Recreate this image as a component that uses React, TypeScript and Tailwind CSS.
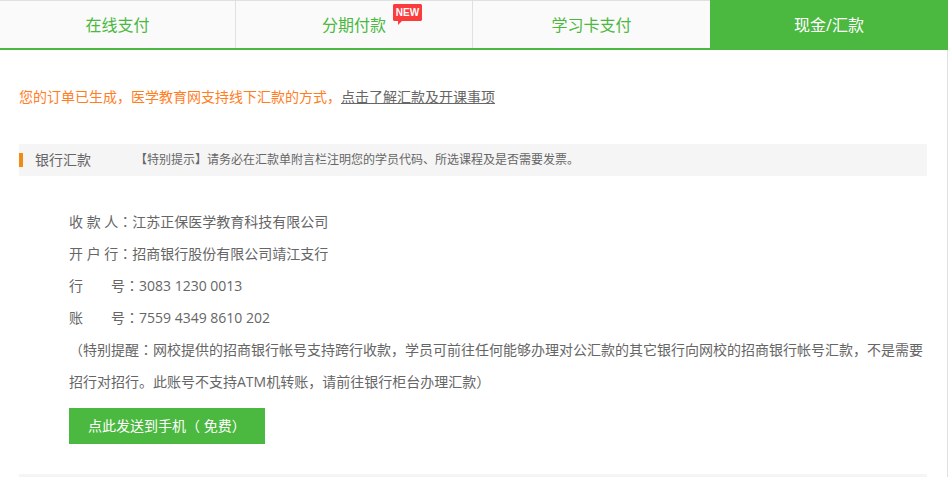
type Tab = {
  label: string;
  isNew?: boolean;
  active?: boolean;
};

const tabs: Tab[] = [
  { label: "在线支付" },
  { label: "分期付款", isNew: true },
  { label: "学习卡支付" },
  { label: "现金/汇款", active: true },
];

const account = [
  { label: "收 款 人", value: "江苏正保医学教育科技有限公司" },
  { label: "开 户 行", value: "招商银行股份有限公司靖江支行" },
  { label: "行\u3000\u3000号", value: "3083 1230 0013" },
  { label: "账\u3000\u3000号", value: "7559 4349 8610 202" },
];

// The SC face sets the full-width colon to the left, the JP face centers it.
function Colon() {
  return (
    <span lang="ja" className="font-['Open_Sans','Noto_Sans_CJK_JP',sans-serif]">
      ：
    </span>
  );
}

function NewBadge() {
  return (
    <span className="absolute left-full top-[3px] ml-[7px] h-[21px] w-[29px]">
      <svg viewBox="0 0 29 21" className="absolute inset-0 h-full w-full" aria-hidden="true">
        <path
          d="M1 0H28L29 1V16L28 17H9L5 21V17H1L0 16V1Z"
          fill="#fb3c3c"
        />
      </svg>
      <span className="relative block text-center font-['Liberation_Sans'] text-[10px] font-bold leading-[17px] text-white">
        NEW
      </span>
    </span>
  );
}

function PayTabs() {
  return (
    <nav className="grid grid-cols-[236fr_237fr_237fr_238fr] border-b-2 border-[#4bb83f]">
      {tabs.map((tab) => (
        <a
          key={tab.label}
          href="#"
          aria-current={tab.active ? "page" : undefined}
          className={
            tab.active
              ? "flex h-12 justify-center border-t border-[#4bb83f] bg-[#4bb83f] text-base leading-12 text-white"
              : "flex h-12 justify-center border-t border-r border-[#e0e0e0] bg-[#fafafa] text-base leading-12 text-[#4bb83f] nth-3:border-r-0"
          }
        >
          <span className="relative">
            {tab.label}
            {tab.isNew && <NewBadge />}
          </span>
        </a>
      ))}
    </nav>
  );
}

export default function App() {
  return (
    <div className="mr-px bg-white font-['Open_Sans','Noto_Sans_CJK_SC',sans-serif] text-sm text-[#666]">
      <PayTabs />

      <main className="border-r border-[#e0e0e0] pr-5 pl-[19px]">
        <p className="pt-[31px] leading-8 text-[#ff7e1f]">
          您的订单已生成，医学教育网支持线下汇款的方式，
          <a href="#" className="text-[#666] underline">
            点击了解汇款及开课事项
          </a>
        </p>

        <section className="pt-[31px]">
          <div className="flex h-8 items-center bg-[#f5f5f5]">
            <span className="mr-3 h-3.5 w-1 bg-[#f28a16]" />
            <h2 className="w-[100px]">银行汇款</h2>
            <p className="text-xs leading-8">
              【特别提示】请务必在汇款单附言栏注明您的学员代码、所选课程及是否需要发票。
            </p>
          </div>

          <div className="pt-[30px] pb-[30px] pl-[50px] leading-8">
            <dl>
              {account.map((row) => (
                <div key={row.value} className="flex">
                  <dt className="whitespace-pre">
                    {row.label}
                    <Colon />
                  </dt>
                  <dd>{row.value}</dd>
                </div>
              ))}
            </dl>
            <p>
              （特别提醒
              <Colon />
              网校提供的招商银行帐号支持跨行收款，学员可前往任何能够办理对公汇款的其它银行向网校的招商银行帐号汇款，不是需要招行对招行。此账号不支持ATM机转账，请前往银行柜台办理汇款）
            </p>
            <button
              type="button"
              className="mt-2.5 block h-9 bg-[#4bb83f] px-[19px] leading-9 text-white"
            >
              点此发送到手机（ 免费）
            </button>
          </div>
        </section>

        <div className="h-[3px] bg-[#f5f5f5]" />
      </main>
    </div>
  );
}
